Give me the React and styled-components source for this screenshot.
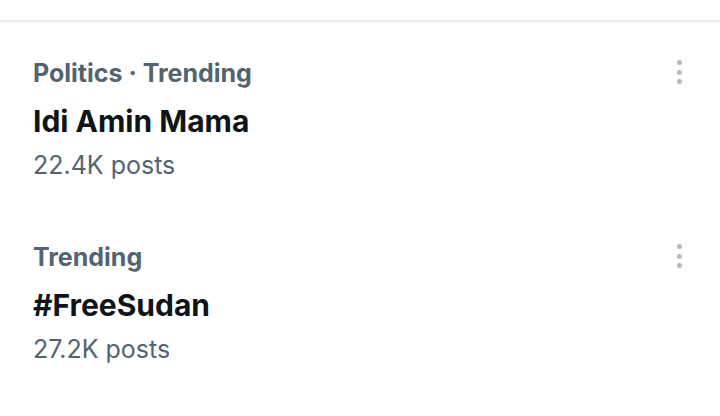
import React from 'react';
import styled, { createGlobalStyle } from 'styled-components';

const GlobalStyle = createGlobalStyle`
  body {
    margin: 0;
    background: #ffffff;
    font-family: Inter, Roboto, "Noto Sans", "Liberation Sans", sans-serif;
  }
`;

const Page = styled.div`
  width: 720px;
  padding-top: 20px;
`;

const Divider = styled.div`
  height: 2px;
  background: #e7ecec;
`;

const Item = styled.div`
  display: flex;
  align-items: flex-start;
  padding: 35px 0 25px 33px;
`;

const Content = styled.div`
  flex: 1;
  display: flex;
  flex-direction: column;
`;

const Label = styled.div`
  font-size: 25px;
  font-weight: 700;
  line-height: 32px;
  color: #536471;
`;

const Title = styled.div`
  margin-top: 14px;
  font-size: 30px;
  font-weight: 700;
  line-height: 36px;
  color: #0f1419;
`;

const Count = styled.div`
  margin-top: 10px;
  font-size: 25px;
  line-height: 32px;
  color: #536471;
`;

const MenuButton = styled.button`
  display: flex;
  flex-direction: column;
  align-items: center;
  gap: 4.5px;
  border: 0;
  background: none;
  padding: 3px 0 0;
  margin-right: 38px;
  width: 5px;
  cursor: pointer;
`;

const Dot = styled.span`
  width: 5px;
  height: 5px;
  border-radius: 50%;
  background: #aebbc5;
`;

const trends = [
  { label: 'Politics · Trending', title: 'Idi Amin Mama', count: '22.4K posts' },
  { label: 'Trending', title: '#FreeSudan', count: '27.2K posts' },
];

export default function App() {
  return (
    <Page>
      <GlobalStyle />
      <Divider />
      {trends.map((t) => (
        <Item key={t.title}>
          <Content>
            <Label>{t.label}</Label>
            <Title>{t.title}</Title>
            <Count>{t.count}</Count>
          </Content>
          <MenuButton aria-label="More">
            <Dot />
            <Dot />
            <Dot />
          </MenuButton>
        </Item>
      ))}
    </Page>
  );
}
